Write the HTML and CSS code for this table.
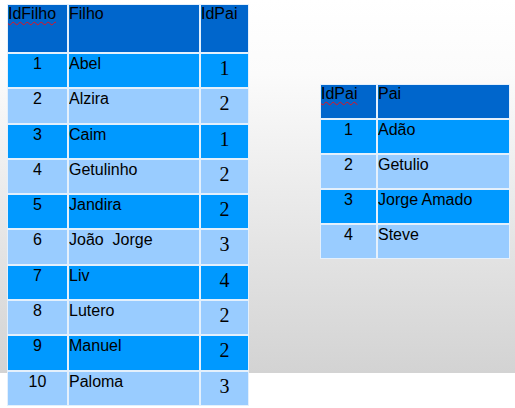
FILE: index.html
```html
<!DOCTYPE html>
<html lang="pt">
<head>
<meta charset="utf-8">
<title>Filho / Pai</title>
<link rel="stylesheet" href="styles.css">
</head>
<body>
<div class="slide">
  <table class="grid filhos">
    <colgroup><col class="c-id1"><col class="c-nome1"><col class="c-pai1"></colgroup>
    <thead>
      <tr class="head1"><th><span class="spell">IdFilho</span></th><th class="name">Filho</th><th>IdPai</th></tr>
    </thead>
    <tbody>
      <tr class="odd"><td class="id">1</td><td class="name">Abel</td><td class="ref">1</td></tr>
      <tr class="even"><td class="id">2</td><td class="name">Alzira</td><td class="ref">2</td></tr>
      <tr class="odd"><td class="id">3</td><td class="name">Caim</td><td class="ref">1</td></tr>
      <tr class="even"><td class="id">4</td><td class="name">Getulinho</td><td class="ref">2</td></tr>
      <tr class="odd"><td class="id">5</td><td class="name">Jandira</td><td class="ref">2</td></tr>
      <tr class="even"><td class="id">6</td><td class="name">João&nbsp; Jorge</td><td class="ref">3</td></tr>
      <tr class="odd"><td class="id">7</td><td class="name">Liv</td><td class="ref">4</td></tr>
      <tr class="even"><td class="id">8</td><td class="name">Lutero</td><td class="ref">2</td></tr>
      <tr class="odd"><td class="id">9</td><td class="name">Manuel</td><td class="ref">2</td></tr>
      <tr class="even"><td class="id">10</td><td class="name">Paloma</td><td class="ref">3</td></tr>
    </tbody>
  </table>

  <table class="grid pais">
    <colgroup><col class="c-id2"><col class="c-nome2"></colgroup>
    <thead>
      <tr class="head2"><th><span class="spell">IdPai</span></th><th class="name">Pai</th></tr>
    </thead>
    <tbody>
      <tr class="odd"><td class="id">1</td><td class="name">Adão</td></tr>
      <tr class="even"><td class="id">2</td><td class="name">Getulio</td></tr>
      <tr class="odd"><td class="id">3</td><td class="name">Jorge Amado</td></tr>
      <tr class="even"><td class="id">4</td><td class="name">Steve</td></tr>
    </tbody>
  </table>
</div>
</body>
</html>
```

FILE: styles.css
```css
html, body {
  margin: 0;
  padding: 0;
  background: #ffffff;
}

body {
  width: 515px;
  height: 408px;
  overflow: hidden;
  font-family: "Liberation Sans", Arial, sans-serif;
  color: #000;
}

.slide {
  height: 373px;
  background: linear-gradient(to bottom, #ffffff 0%, #fbfbfb 20%, #d3d3d3 100%);
  display: flex;
  align-items: flex-start;
  padding: 4px 0 0 7px;
  box-sizing: border-box;
  gap: 71px;
}

.grid {
  border-collapse: separate;
  border-spacing: 0;
  table-layout: fixed;
  font-size: 16px;
  line-height: 18px;
  flex: none;
}

.grid th,
.grid td {
  border: 1px solid #e4f0fc;
  padding: 1px 0 0 0;
  vertical-align: top;
  overflow: hidden;
  white-space: nowrap;
}

.grid th {
  background: #0066cc;
  font-weight: normal;
  text-align: left;
  padding-top: 0;
}

.grid .odd td { background: #0099ff; }
.grid .even td { background: #99ccff; }

.grid td.id { text-align: center; }
.grid .name { text-align: left; }
.grid td.name { padding-left: 0; }

.grid td.ref {
  text-align: center;
  font-family: "Liberation Serif", "Times New Roman", serif;
  font-size: 20px;
  line-height: 22px;
  padding-top: 3px;
}

.spell {
  text-decoration: underline wavy #e8101a;
  text-decoration-thickness: 1px;
  text-underline-offset: 2px;
}

/* Filho table */
.filhos { width: 242px; }
.c-id1 { width: 61px; }
.c-nome1 { width: 132px; }
.c-pai1 { width: 49px; }
.head1 { height: 49px; }
.filhos tbody tr { height: 35.3px; }

/* Pai table */
.pais {
  width: 190px;
  margin-top: 80px;
}
.c-id2 { width: 57px; }
.c-nome2 { width: 133px; }
.pais tr { height: 35px; }
```
